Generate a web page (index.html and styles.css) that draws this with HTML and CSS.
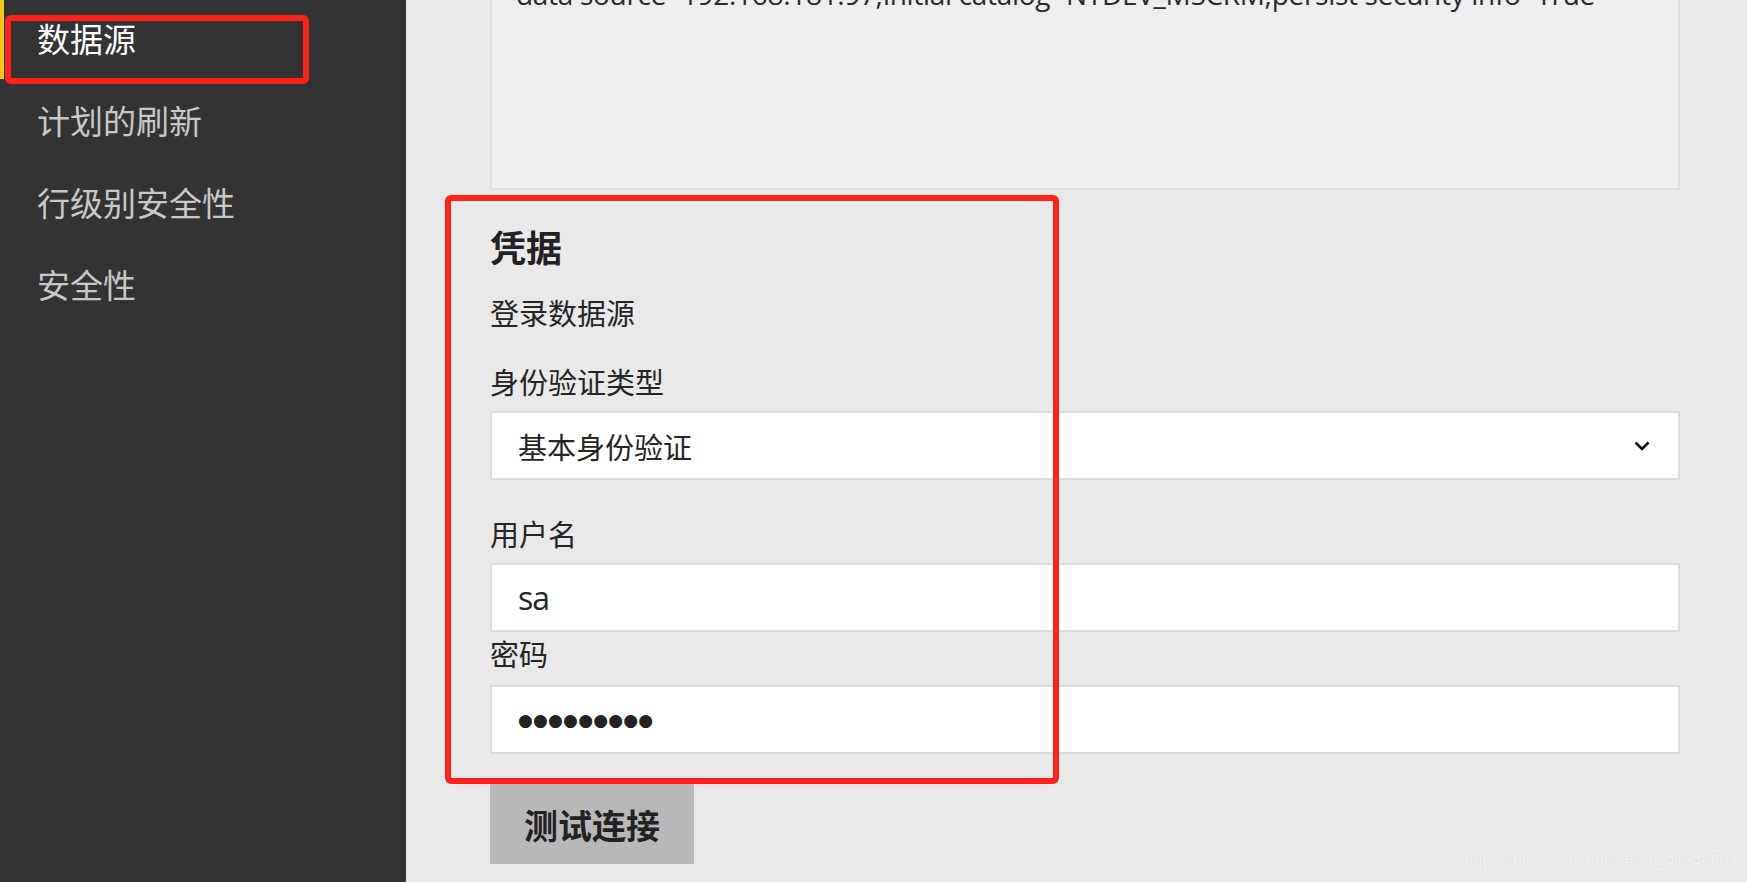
FILE: index.html
```html
<!DOCTYPE html>
<html lang="zh-CN">
<head>
  <meta charset="UTF-8">
  <meta name="viewport" content="width=device-width, initial-scale=1.0">
  <title>数据源 - 设置</title>
  <link rel="stylesheet" href="styles.css">
</head>
<body>
  <div class="page">
    <nav class="sidebar">
      <ul class="nav-list">
        <li class="nav-item active">数据源</li>
        <li class="nav-item">计划的刷新</li>
        <li class="nav-item">行级别安全性</li>
        <li class="nav-item">安全性</li>
      </ul>
      <div class="mark mark-nav"></div>
    </nav>

    <main class="content">
      <div class="conn-string">data source=192.168.181.97;initial catalog=NTDEV_MSCRM;persist security info=True</div>

      <section class="credentials">
        <h3 class="section-title">凭据</h3>
        <p class="section-sub">登录数据源</p>

        <div class="field field-auth">
          <div class="field-label">身份验证类型</div>
          <div class="input select">
            <span>基本身份验证</span>
            <svg class="chevron" width="16" height="10" viewBox="0 0 16 10">
              <polyline points="1.5,1.5 8,8 14.5,1.5" fill="none" stroke="#111" stroke-width="2.6"/>
            </svg>
          </div>
        </div>

        <div class="field field-user">
          <div class="field-label">用户名</div>
          <div class="input text-value">sa</div>
        </div>

        <div class="field field-pass">
          <div class="field-label">密码</div>
          <div class="input password">●●●●●●●●●</div>
        </div>
      </section>

      <button class="test-button">测试连接</button>

      <div class="mark mark-form"></div>
      <div class="watermark">https://blog.csdn.net/weixin_41542593</div>
    </main>
  </div>
</body>
</html>
```

FILE: styles.css
```css
* {
  margin: 0;
  padding: 0;
  box-sizing: border-box;
}

html, body {
  height: 100%;
  overflow: hidden;
}

body {
  font-family: "Noto Sans CJK SC", "Noto Sans", sans-serif;
  color: #252525;
  background: #e9e9e9;
}

.page {
  display: flex;
  height: 882px;
}

/* 左侧导航 */
.sidebar {
  position: relative;
  width: 406px;
  flex-shrink: 0;
  background: #333333;
}

.nav-list {
  list-style: none;
  margin-top: -3px;
}

.nav-item {
  height: 82px;
  line-height: 82px;
  padding-left: 37px;
  font-size: 33px;
  color: #c8c8c8;
}

.nav-item.active {
  color: #ffffff;
  border-left: 4px solid #f2c811;
  padding-left: 33px;
}

/* 主区域 */
.content {
  position: relative;
  flex: 1;
  padding: 0 67px 0 84px;
}

.conn-string {
  margin-top: -40px;
  height: 230px;
  background: #eeeeee;
  border: 2px solid #dedede;
  padding: 14px 24px 0;
  font-family: "Open Sans", "Noto Sans", sans-serif;
  font-size: 28px;
  line-height: 36px;
  letter-spacing: -0.3px;
  color: #2a2a2a;
  white-space: nowrap;
  overflow: hidden;
}

.credentials {
  margin-top: 34px;
}

.section-title {
  font-size: 36px;
  line-height: 44px;
  font-weight: 700;
  color: #222;
}

.section-sub {
  margin-top: 26px;
  font-size: 29px;
  line-height: 36px;
}

.field-auth {
  margin-top: 33px;
}

.field-user {
  margin-top: 35px;
}

.field-pass {
  margin-top: 3px;
}

.field-label {
  font-size: 29px;
  line-height: 36px;
  margin-bottom: 12px;
}

.field-pass .field-label {
  margin-bottom: 14px;
}

.input {
  display: flex;
  align-items: center;
  height: 69px;
  background: #ffffff;
  border: 2px solid #dcdcdc;
  padding: 0 28px 0 26px;
  font-size: 29px;
}

.select {
  justify-content: space-between;
}

.chevron {
  display: block;
}

.text-value {
  font-family: "Open Sans", "Noto Sans", sans-serif;
  font-size: 32px;
  letter-spacing: -1px;
}

.password {
  font-family: "DejaVu Sans", sans-serif;
  font-size: 17px;
  letter-spacing: 0.2px;
  color: #222;
}

.test-button {
  display: block;
  margin-top: 30px;
  width: 204px;
  height: 80px;
  border: none;
  background: #b8b8b8;
  font-family: "Noto Sans CJK SC", sans-serif;
  font-size: 34px;
  font-weight: 700;
  color: #222;
}

/* 截图上的红框标注 */
.mark {
  position: absolute;
  border: 6px solid #fd2217;
  border-radius: 6px;
}

.mark-nav {
  left: 5px;
  top: 15px;
  width: 304px;
  height: 69px;
}

.mark-form {
  left: 39px;
  top: 195px;
  width: 614px;
  height: 589px;
}

.watermark {
  position: absolute;
  right: 10px;
  bottom: 11px;
  font-family: "Liberation Sans", Arial, sans-serif;
  font-size: 16px;
  color: rgba(255, 255, 255, 0.75);
  text-shadow: 0 0 1px rgba(0, 0, 0, 0.15);
}
```
